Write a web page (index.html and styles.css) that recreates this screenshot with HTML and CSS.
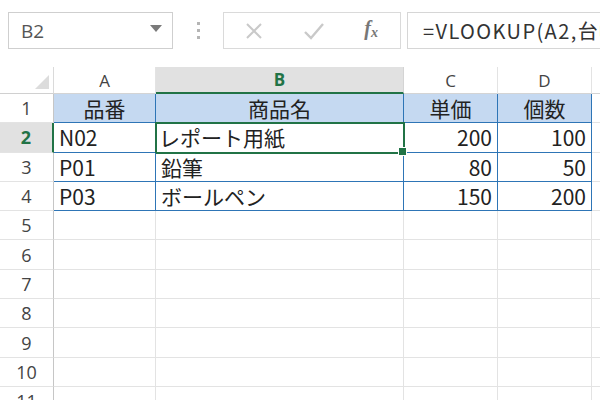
FILE: index.html
```html
<!DOCTYPE html>
<html lang="ja">
<head>
    <meta charset="UTF-8">
    <title>VLOOKUP</title>
    <link rel="stylesheet" href="styles.css">
</head>
<body>
    <div class="toolbar">
        <div class="name-box">
            <span>B2</span>
            <svg class="caret" width="12" height="7" viewBox="0 0 12 7"><path d="M0 0h12L6 7z" fill="#7a7a7a"/></svg>
        </div>
        <div class="dots"><i></i><i></i><i></i></div>
        <div class="fx-buttons">
            <svg width="20" height="20" viewBox="0 0 20 20"><path d="M3 3L17 17M17 3L3 17" stroke="#c9c9c9" stroke-width="2" fill="none"/></svg>
            <svg width="22" height="20" viewBox="0 0 22 20"><path d="M2 11l6 6L20 3" stroke="#c9c9c9" stroke-width="2.4" fill="none"/></svg>
            <span class="fx">f<sub>x</sub></span>
        </div>
        <div class="formula">=VLOOKUP(A2,台帳!A2:C10,2,FALSE)</div>
    </div>

    <div class="sheet">
        <div class="corner"><span class="tri"></span></div>
        <div class="col-head">A</div>
        <div class="col-head sel">B</div>
        <div class="col-head">C</div>
        <div class="col-head">D</div>
        <div class="col-head last"></div>

        <div class="row-head">1</div>
        <div class="cell tb th">品番</div>
        <div class="cell tb th">商品名</div>
        <div class="cell tb th">単価</div>
        <div class="cell tb th">個数</div>
        <div class="cell"></div>

        <div class="row-head sel">2</div>
        <div class="cell tb">N02</div>
        <div class="cell tb active">レポート用紙</div>
        <div class="cell tb num">200</div>
        <div class="cell tb num">100</div>
        <div class="cell"></div>

        <div class="row-head">3</div>
        <div class="cell tb">P01</div>
        <div class="cell tb">鉛筆</div>
        <div class="cell tb num">80</div>
        <div class="cell tb num">50</div>
        <div class="cell"></div>

        <div class="row-head">4</div>
        <div class="cell tb">P03</div>
        <div class="cell tb">ボールペン</div>
        <div class="cell tb num">150</div>
        <div class="cell tb num">200</div>
        <div class="cell"></div>
    </div>

    <script>
        // empty rows 5-11
        const sheet = document.querySelector(".sheet");
        for (let r = 5; r <= 11; r++) {
            let head = document.createElement("div");
            head.className = "row-head";
            head.textContent = r;
            sheet.appendChild(head);
            for (let c = 0; c < 5; c++) {
                let cell = document.createElement("div");
                cell.className = "cell";
                sheet.appendChild(cell);
            }
        }
    </script>
</body>
</html>
```

FILE: styles.css
```css
body {
    margin: 0;
    width: 600px;
    height: 400px;
    overflow: hidden;
    background: white;
    font-family: "Noto Sans CJK JP", "Noto Sans", sans-serif;
    color: #222;
}
.toolbar {
    height: 67px;
    box-sizing: border-box;
    padding: 12px 0 0 8px;
    display: flex;
    align-items: flex-start;
    white-space: nowrap;
}
.name-box {
    width: 165px;
    height: 37px;
    box-sizing: border-box;
    border: 1px solid #cfcfcf;
    display: flex;
    align-items: center;
    justify-content: space-between;
    padding: 0 10px 0 12px;
    font-family: "Open Sans", sans-serif;
    font-size: 19px;
    color: #555;
}
.caret {
    margin-top: -4px;
}
.dots {
    width: 50px;
    height: 37px;
    display: flex;
    flex-direction: column;
    align-items: center;
    justify-content: center;
    gap: 4px;
}
.dots i {
    width: 3px;
    height: 3px;
    background: #b5b5b5;
}
.fx-buttons {
    width: 178px;
    height: 37px;
    box-sizing: border-box;
    border: 1px solid #dadada;
    display: flex;
    align-items: center;
    justify-content: space-between;
    padding: 0 22px 0 20px;
}
.fx {
    font-family: "Liberation Serif", serif;
    font-style: italic;
    font-weight: bold;
    font-size: 20px;
    color: #777;
    margin-top: -4px;
}
.fx sub {
    font-size: 14px;
    vertical-align: -2px;
}
.formula {
    margin-left: 6px;
    height: 37px;
    box-sizing: border-box;
    border: 1px solid #d6d6d6;
    border-right: none;
    flex: 1;
    overflow: hidden;
    padding-left: 15px;
    line-height: 35px;
    font-size: 20px;
    letter-spacing: 1.4px;
    color: #333;
}

.sheet {
    display: grid;
    grid-template-columns: 54px 102px 248px 94px 94px 1fr;
    grid-template-rows: 27px repeat(11, 29.3px);
}
.corner {
    position: relative;
    border-right: 1px solid #dadada;
    border-bottom: 1px solid #d0d0d0;
}
.tri {
    position: absolute;
    right: 4px;
    bottom: 4px;
    width: 0;
    height: 0;
    border-left: 14px solid transparent;
    border-bottom: 14px solid #dcdcdc;
}
.col-head {
    border-right: 1px solid #e3e3e3;
    border-bottom: 1px solid #d4d4d4;
    display: flex;
    align-items: center;
    justify-content: center;
    font-family: "Open Sans", sans-serif;
    font-size: 17px;
    color: #444;
}
.col-head.sel {
    background: #e1e1e1;
    color: #217346;
    font-weight: bold;
    border-bottom: 2px solid #217346;
    border-right-color: #d4d4d4;
}
.col-head.last {
    border-right: none;
}
.row-head {
    border-right: 1px solid #c6c6c6;
    border-bottom: 1px solid #e3e3e3;
    display: flex;
    align-items: center;
    justify-content: center;
    font-family: "Open Sans", sans-serif;
    font-size: 18px;
    color: #444;
}
.row-head.sel {
    background: #e1e1e1;
    color: #217346;
    font-weight: bold;
    border-right: 2px solid #217346;
}
.cell {
    border-right: 1px solid #e3e3e3;
    border-bottom: 1px solid #e3e3e3;
    display: flex;
    align-items: center;
    padding: 0 5px;
    font-size: 21px;
    white-space: nowrap;
    overflow: visible;
    position: relative;
}
.cell.tb {
    border-right-color: #2e75b6;
    border-bottom-color: #2e75b6;
}
.cell.th {
    background: #c5d9f1;
    justify-content: center;
}
.cell.num {
    justify-content: flex-end;
}
.cell.active {
    outline: 2px solid #217346;
    outline-offset: -1px;
    padding-left: 3px;
}
.cell.active::after {
    content: "";
    position: absolute;
    right: -4px;
    bottom: -4px;
    width: 7px;
    height: 7px;
    background: #217346;
    border: 1px solid white;
    z-index: 2;
}
```
